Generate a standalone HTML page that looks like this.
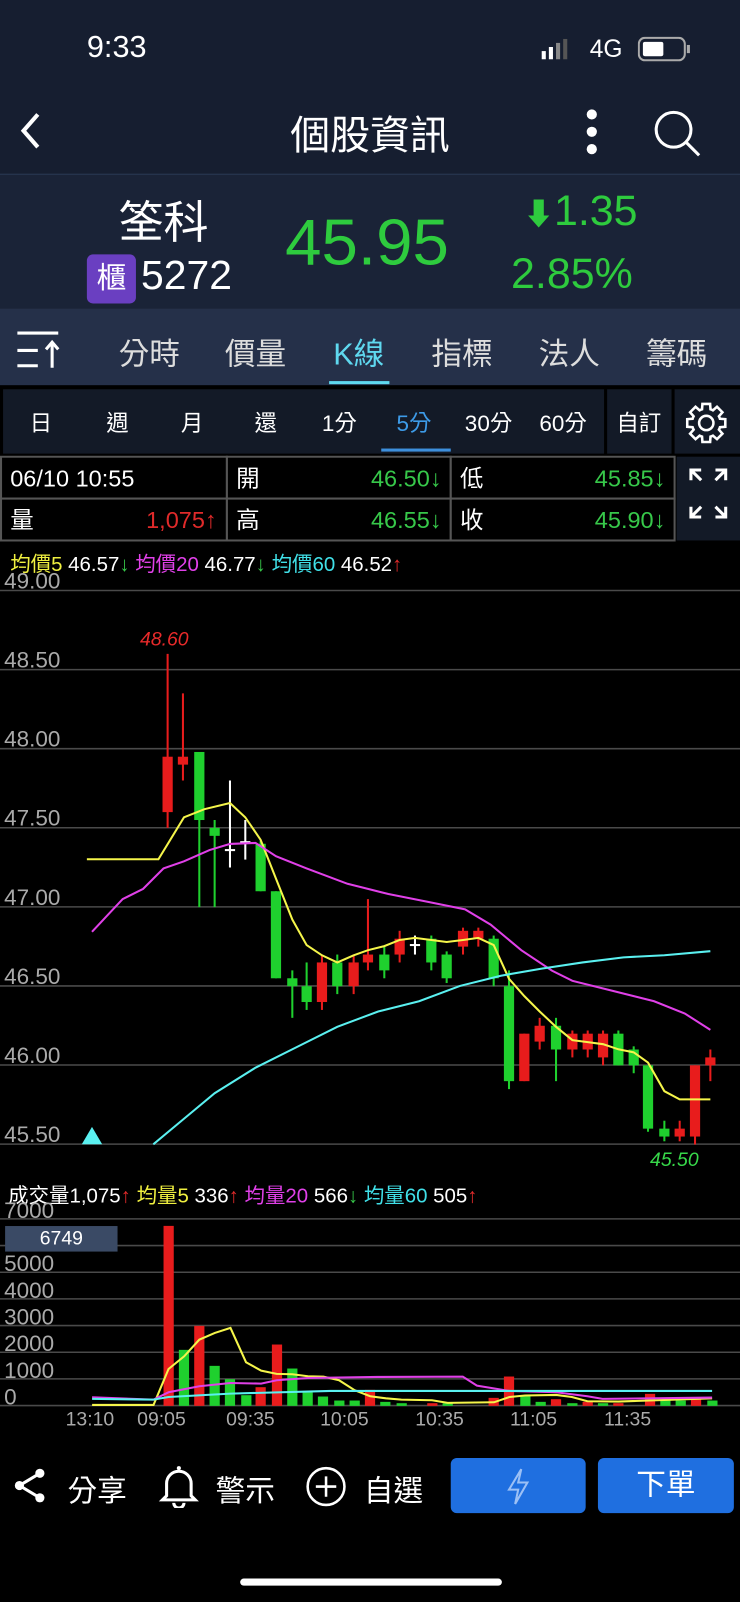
<!DOCTYPE html>
<html><head><meta charset="utf-8">
<style>
*{margin:0;padding:0;box-sizing:border-box}
html,body{width:740px;height:1602px;background:#000;overflow:hidden}
#w{position:absolute;left:0;top:0;width:724px;height:1568px;transform:scale(1.0221,1.0217);transform-origin:0 0;font-family:"Liberation Sans","Noto Sans CJK TC",sans-serif;color:#fff;background:#000}
.a{position:absolute;white-space:nowrap}
.c{transform:translateX(-50%)}
.t{line-height:28px;height:28px}
</style></head><body><div id="w">
<div class="a" style="left:0;top:0;width:724px;height:170px;background:#161e30"></div>
<div class="a" style="left:0;top:170px;width:724px;height:132px;background:#1a2337;border-top:1px solid #2a3a55"></div>
<div class="a" style="left:85px;top:30px;font-size:30px">9:33</div>
<svg class="a" style="left:528px;top:38px" width="40" height="22"><rect x="2" y="12" width="4" height="8" fill="#fff"/><rect x="9" y="8" width="4" height="12" fill="#fff"/><rect x="16" y="4" width="4" height="16" fill="#888"/><rect x="23" y="0" width="4" height="20" fill="#555"/></svg>
<div class="a" style="left:577px;top:35px;font-size:24px">4G</div>
<svg class="a" style="left:624px;top:36px" width="54" height="26"><rect x="1" y="1" width="45" height="22" rx="6" fill="none" stroke="#aaa" stroke-width="2"/><rect x="5" y="5" width="20" height="14" rx="2" fill="#fff"/><rect x="48" y="8" width="3" height="8" fill="#aaa"/></svg>
<svg class="a" style="left:15px;top:108px" width="30" height="40"><path d="M22 4 L8 20 L22 36" fill="none" stroke="#fff" stroke-width="4"/></svg>
<div class="a c" style="left:362px;top:102px;font-size:39px">個股資訊</div>
<svg class="a" style="left:568px;top:104px" width="22" height="50"><circle cx="11" cy="8" r="5" fill="#fff"/><circle cx="11" cy="25" r="5" fill="#fff"/><circle cx="11" cy="42" r="5" fill="#fff"/></svg>
<svg class="a" style="left:638px;top:106px" width="50" height="50"><circle cx="21" cy="21" r="17" fill="none" stroke="#fff" stroke-width="3"/><path d="M33 33 L46 46" stroke="#fff" stroke-width="3"/></svg>
<div class="a c" style="left:160px;top:182px;font-size:44px">筌科</div>
<div class="a" style="left:85px;top:249px;width:48px;height:48px;background:#6a3fc1;border-radius:6px;font-size:29px;text-align:center;line-height:48px">櫃</div>
<div class="a" style="left:138px;top:248px;font-size:40px">5272</div>
<div class="a" style="left:279px;top:200px;font-size:64px;color:#2ecb3e">45.95</div>
<div class="a" style="left:512px;top:182px;font-size:42px;color:#2ecb3e"><span style="font-size:30px;font-weight:bold">⬇</span>1.35</div>
<div class="a" style="left:500px;top:244px;font-size:42px;color:#2ecb3e">2.85%</div>
<div class="a" style="left:0;top:302px;width:724px;height:75px;background:#253049"></div>
<svg class="a" style="left:15px;top:322px" width="50" height="40"><path d="M2 4H42M2 21H22M2 36H22" stroke="#fff" stroke-width="3"/><path d="M36 38V14M30 20L36 13L42 20" stroke="#fff" stroke-width="3" fill="none"/></svg>
<div class="a c" style="left:146px;top:322px;font-size:30px;color:#ddd">分時</div>
<div class="a c" style="left:250px;top:322px;font-size:30px;color:#ddd">價量</div>
<div class="a c" style="left:351px;top:322px;font-size:30px;color:#5fd8ef">K線</div>
<div class="a" style="left:322px;top:373px;width:59px;height:3px;background:#5fd8ef"></div>
<div class="a c" style="left:452px;top:322px;font-size:30px;color:#ddd">指標</div>
<div class="a c" style="left:557px;top:322px;font-size:30px;color:#ddd">法人</div>
<div class="a c" style="left:662px;top:322px;font-size:30px;color:#ddd">籌碼</div>
<div class="a" style="left:3px;top:381px;width:588px;height:63px;background:#131a27"></div>
<div class="a" style="left:594px;top:381px;width:63px;height:63px;background:#131a27"></div>
<div class="a" style="left:660px;top:381px;width:64px;height:63px;background:#131a27"></div>
<div id="per"></div>
<div class="a" style="left:373px;top:439px;width:68px;height:3px;background:#3d8fdc"></div>
<div class="a c" style="left:625px;top:397px;font-size:22px">自訂</div>
<svg class="a" style="left:669px;top:392px" width="44" height="44" viewBox="-22 -22 44 44"><path id="g" fill="none" stroke="#fff" stroke-width="2.5"/><circle r="7" fill="none" stroke="#fff" stroke-width="2.5"/></svg>
<svg class="a" style="left:0;top:446px" width="724" height="84"><g fill="#000" stroke="#555" stroke-width="2"><rect x="1" y="1" width="221" height="41"/><rect x="222" y="1" width="219" height="41"/><rect x="441" y="1" width="219" height="41"/><rect x="1" y="42" width="221" height="41"/><rect x="222" y="42" width="219" height="41"/><rect x="441" y="42" width="219" height="41"/></g><rect x="662" y="1" width="62" height="82" fill="#131a27"/><g stroke="#fff" stroke-width="3" fill="none"><path d="M676 24v-10h10M676 14l10 10M710 24v-10h-10M710 14l-10 10M676 50v10h10M676 60l10-10M710 50v10h-10M710 60l-10-10"/></g></svg>
<div class="a t" style="left:10px;top:454px;font-size:23px">06/10 10:55</div>
<div class="a t" style="left:10px;top:495px;font-size:23px">量</div>
<div class="a t" style="right:512px;top:495px;font-size:23px;color:#e02a2a">1,075↑</div>
<div class="a t" style="left:231px;top:454px;font-size:23px">開</div>
<div class="a t" style="right:292px;top:454px;font-size:23px;color:#37c84a">46.50↓</div>
<div class="a t" style="left:231px;top:495px;font-size:23px">高</div>
<div class="a t" style="right:292px;top:495px;font-size:23px;color:#37c84a">46.55↓</div>
<div class="a t" style="left:450px;top:454px;font-size:23px">低</div>
<div class="a t" style="right:73px;top:454px;font-size:23px;color:#37c84a">45.85↓</div>
<div class="a t" style="left:450px;top:495px;font-size:23px">收</div>
<div class="a t" style="right:73px;top:495px;font-size:23px;color:#37c84a">45.90↓</div>
<div class="a" style="left:10px;top:536px;font-size:20px"><span style="color:#f0f040">均價5</span> 46.57<span style="color:#37c84a">↓</span> <span style="color:#e040e8">均價20</span> 46.77<span style="color:#37c84a">↓</span> <span style="color:#40e0e8">均價60</span> 46.52<span style="color:#e02a2a">↑</span></div>
<div class="a" style="left:8px;top:1154px;font-size:20px">成交量1,075<span style="color:#e02a2a">↑</span> <span style="color:#f0f040">均量5</span> 336<span style="color:#e02a2a">↑</span> <span style="color:#e040e8">均量20</span> 566<span style="color:#37c84a">↓</span> <span style="color:#40e0e8">均量60</span> 505<span style="color:#e02a2a">↑</span></div>
<svg id="ch" class="a" style="left:0;top:0" width="724" height="1568"></svg>
<div class="a" style="left:5px;top:1200px;width:110px;height:25px;background:#3a4a65;font-size:19px;text-align:center;line-height:25px">6749</div>
<svg class="a" style="left:12px;top:1436px" width="36" height="36"><circle cx="27" cy="6" r="4.5" fill="#fff"/><circle cx="7" cy="18" r="4.5" fill="#fff"/><circle cx="27" cy="30" r="4.5" fill="#fff"/><path d="M27 6L7 18L27 30" stroke="#fff" stroke-width="3" fill="none"/></svg>
<div class="a" style="left:66px;top:1436px;font-size:29px">分享</div>
<svg class="a" style="left:155px;top:1432px" width="40" height="44"><path d="M8 32V20a12 12 0 0 1 24 0v12l4 4H4z" fill="none" stroke="#fff" stroke-width="3"/><path d="M15 39a5 5 0 0 0 10 0" stroke="#fff" stroke-width="3" fill="none"/><circle cx="20" cy="5" r="2" fill="#fff"/></svg>
<div class="a" style="left:211px;top:1436px;font-size:29px">警示</div>
<svg class="a" style="left:298px;top:1434px" width="42" height="42"><circle cx="21" cy="21" r="18" fill="none" stroke="#fff" stroke-width="2.5"/><path d="M21 11v20M11 21h20" stroke="#fff" stroke-width="2.5"/></svg>
<div class="a" style="left:356px;top:1436px;font-size:29px">自選</div>
<div class="a" style="left:441px;top:1427px;width:132px;height:54px;background:#1f6fe0;border-radius:6px"></div>
<svg class="a" style="left:494px;top:1436px" width="26" height="38"><path d="M16 2L4 22h9l-3 14L22 15h-9z" fill="none" stroke="#9cc0f5" stroke-width="2"/></svg>
<div class="a" style="left:585px;top:1427px;width:133px;height:54px;background:#1f6fe0;border-radius:6px;font-size:29px;text-align:center;line-height:54px">下單</div>
<div class="a" style="left:235px;top:1545px;width:256px;height:7px;background:#fff;border-radius:4px"></div>
</div>
<script>
var ch=document.getElementById('ch'),s='';
var d='';for(var i=0;i<8;i++){var a=i*Math.PI/4;function P(r,t){return (r*Math.cos(t)).toFixed(2)+' '+(r*Math.sin(t)).toFixed(2)}
d+=(i?'L':'M')+P(14,a-0.3)+'L'+P(19,a-0.2)+'L'+P(19,a+0.2)+'L'+P(14,a+0.3)+'A14 14 0 0 1 '+P(14,a+Math.PI/4-0.3);}
document.getElementById('g').setAttribute('d',d+'Z');
var per=[['日',40],['週',115],['月',188],['還',260],['1分',332],['5分',405],['30分',478],['60分',551]],h='';
per.forEach(function(p){h+='<div class="a c" style="left:'+p[1]+'px;top:397px;font-size:22px;color:'+(p[0]=='5分'?'#3d9be8':'#fff')+'">'+p[0]+'</div>'});
document.getElementById('per').outerHTML=h;
function Y(p){return 578+(49-p)*154.9}
['49.00','48.50','48.00','47.50','47.00','46.50','46.00','45.50'].forEach(function(l,i){var y=578+i*77.4;
s+='<line x1="0" x2="724" y1="'+y+'" y2="'+y+'" stroke="#4a4a4a" stroke-width="1.5"/><text x="4" y="'+(y-2)+'" fill="#aaa" font-size="22">'+l+'</text>';});
var C=[[164,47.6,47.95,48.6,47.5],[179,47.9,47.95,48.35,47.8],[195,47.98,47.55,47.98,47.0],[210,47.5,47.45,47.55,47.0],[225,47.35,47.36,47.8,47.25,1],[240,47.4,47.41,47.55,47.3,1],[255,47.4,47.1,47.42,47.1],[270,47.1,46.55,47.1,46.55],[286,46.55,46.5,46.6,46.3],[300,46.5,46.4,46.65,46.35],[315,46.4,46.65,46.7,46.35],[330,46.65,46.5,46.7,46.45],[346,46.5,46.65,46.7,46.45],[360,46.65,46.7,47.05,46.6],[376,46.7,46.6,46.75,46.55],[391,46.7,46.8,46.85,46.65],[406,46.75,46.76,46.82,46.7,1],[422,46.8,46.65,46.82,46.6],[437,46.7,46.55,46.72,46.52],[453,46.75,46.85,46.87,46.7],[468,46.8,46.85,46.87,46.75],[483,46.8,46.55,46.82,46.5],[498,46.5,45.9,46.6,45.85],[513,45.9,46.2,46.2,45.9],[528,46.15,46.25,46.3,46.1],[544,46.25,46.1,46.3,45.9],[560,46.1,46.2,46.22,46.05],[575,46.1,46.2,46.22,46.05],[590,46.05,46.2,46.22,46.0],[605,46.2,46.0,46.22,46.0],[620,46.1,46.0,46.12,45.95],[634,46.0,45.6,46.0,45.58],[650,45.6,45.55,45.65,45.52],[665,45.55,45.6,45.65,45.52],[680,45.55,46.0,46.0,45.5],[695,46.0,46.05,46.1,45.9]];
C.forEach(function(c){var col=c[5]?'#fff':(c[2]>=c[1]?'#e81c1c':'#1fd02e');var t=Math.min(Y(c[1]),Y(c[2])),b=Math.max(Y(c[1]),Y(c[2]));
s+='<line x1="'+c[0]+'" x2="'+c[0]+'" y1="'+Y(c[3])+'" y2="'+Y(c[4])+'" stroke="'+col+'" stroke-width="2"/>';
if(c[5])s+='<line x1="'+(c[0]-5)+'" x2="'+(c[0]+5)+'" y1="'+t+'" y2="'+t+'" stroke="#fff" stroke-width="2"/>';
else s+='<rect x="'+(c[0]-5)+'" y="'+t+'" width="10" height="'+Math.max(2,b-t)+'" fill="'+col+'"/>';});
function pl(pts,col){s+='<polyline points="'+pts+'" fill="none" stroke="'+col+'" stroke-width="2"/>';}
pl('85,841 155,841 180,800 200,792 225,786 240,800 255,822 270,860 286,900 300,925 315,935 330,942 346,935 360,930 376,926 391,920 406,918 422,920 437,922 453,920 468,918 483,925 498,958 513,975 528,990 544,1005 560,1018 575,1020 590,1022 605,1027 620,1030 634,1040 650,1068 665,1076 695,1076','#f5f54a');
pl('90,912 120,880 140,870 160,850 180,843 205,832 225,826 250,825 270,838 300,850 340,865 380,875 420,883 455,890 480,905 510,930 540,950 560,960 600,970 640,980 670,992 695,1008','#e040e8');
pl('150,1120 180,1095 210,1070 250,1045 290,1025 330,1005 370,990 410,980 450,965 490,955 530,948 570,942 610,937 650,935 695,931','#5af0f0');
s+='<polygon points="90,1103 80,1120 100,1120" fill="#5af0f0"/>';
s+='<text x="137" y="632" fill="#e82a2a" font-size="19" font-style="italic">48.60</text><text x="636" y="1141" fill="#37d84a" font-size="19" font-style="italic">45.50</text>';
['7000','','5000','4000','3000','2000','1000','0'].forEach(function(l,i){var y=1193+i*26.1;
s+='<line x1="0" x2="724" y1="'+y+'" y2="'+y+'" stroke="#4a4a4a" stroke-width="1.5"/>';if(l)s+='<text x="4" y="'+(y-1)+'" fill="#aaa" font-size="22">'+l+'</text>';});
function VY(v){return 1376-v*0.0261}
var V=[[165,6749,1],[180,2100],[195,3000,1],[210,1500],[225,1000],[241,400],[255,700,1],[271,2300,1],[286,1400],[301,500],[316,350],[332,200],[347,200],[362,600,1],[377,150],[393,100],[423,100,1],[438,100],[483,300,1],[498,1100,1],[514,400],[529,150],[544,250,1],[560,100],[575,150,1],[590,100],[605,100,1],[636,450,1],[651,200],[666,200],[681,300,1],[697,200]];
V.forEach(function(v){s+='<rect x="'+(v[0]-5)+'" y="'+VY(v[1])+'" width="10" height="'+(1376-VY(v[1]))+'" fill="'+(v[2]?'#e81c1c':'#1fd02e')+'"/>';});
function zp(a){var o=[];for(var i=0;i<a.length;i+=2)o.push((a[i]*0.462).toFixed(1)+','+((a[i+1]/3+1170)/1.022).toFixed(1));return o.join(' ')}
pl(zp([195,706,325,706,357,598,390,560,422,510,455,490,488,475,521,578,553,603,586,613,619,614,652,620,685,621,718,632,751,662,784,680,817,686,850,690,915,692,948,700,1046,698,1079,682,1112,678,1178,676,1211,682,1244,695,1310,696,1508,686]),'#f5f54a');
pl(zp([195,683,325,690,357,668,422,650,488,640,553,642,586,632,652,625,800,622,980,621,1010,648,1079,664,1178,668,1244,680,1276,688,1508,684]),'#e040e8');
pl(zp([195,688,325,690,357,682,488,672,700,664,1508,664]),'#5af0f0');
[['13:10',88],['09:05',158],['09:35',245],['10:05',337],['10:35',430],['11:05',522],['11:35',614]].forEach(function(t){s+='<text x="'+t[1]+'" y="1395" fill="#aaa" font-size="19" text-anchor="middle">'+t[0]+'</text>';});
ch.innerHTML=s;
</script>
</body></html>
